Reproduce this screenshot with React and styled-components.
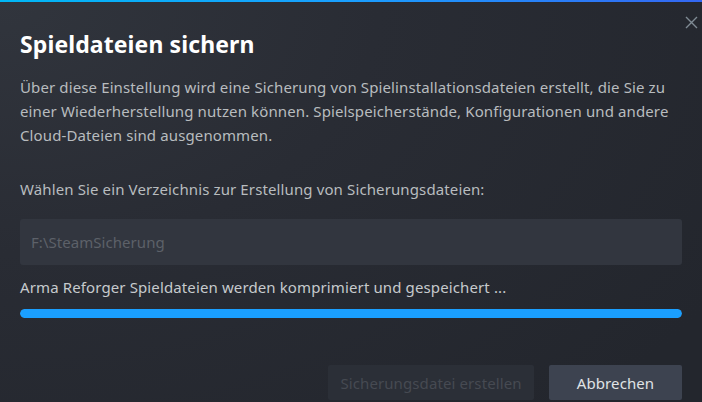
import React from "react";
import styled, { createGlobalStyle } from "styled-components";

const Global = createGlobalStyle`
  html, body { margin: 0; padding: 0; background: #23262e; }
  body { width: 702px; height: 402px; overflow: hidden; }
  * { box-sizing: border-box; }
`;

const Dialog = styled.div`
  position: relative;
  width: 702px;
  height: 402px;
  display: flex;
  flex-direction: column;
  background: radial-gradient(ellipse 120% 140% at 0% 0%, #31353d 0%, #292c34 45%, #23262d 100%);
  font-family: "Noto Sans", "Open Sans", sans-serif;
  color: #b8bcbf;
`;

const AccentBar = styled.div`
  height: 2px;
  flex: none;
  background: linear-gradient(to right, #00b7f5 0%, #1a9fff 50%, #3467f2 100%);
`;

const Close = styled.button`
  position: absolute;
  top: 14px;
  right: 3px;
  width: 16px;
  height: 16px;
  padding: 0;
  border: none;
  background: transparent;
  display: flex;
  align-items: center;
  justify-content: center;
  cursor: pointer;
`;

const Body = styled.div`
  flex: 1;
  display: flex;
  flex-direction: column;
  padding: 26px 20px 2px 20px;
`;

const Title = styled.h1`
  margin: 0;
  font-size: 23px;
  line-height: 32px;
  font-weight: 700;
  color: #ffffff;
  letter-spacing: 0.1px;
`;

const Text = styled.p`
  margin: ${(p) => p.$mt || 0}px 0 0 0;
  font-size: 15px;
  line-height: 24px;
  letter-spacing: 0.12px;
  color: ${(p) => p.$color || "#b8bcbf"};
`;

const PathInput = styled.input`
  margin-top: 18px;
  height: 46px;
  width: 100%;
  border: none;
  outline: none;
  border-radius: 3px;
  background: #32363f;
  padding: 0 11px;
  font-family: inherit;
  font-size: 15px;
  letter-spacing: 0.05px;
  color: #c6cacd;
  &::placeholder { color: #5d6169; }
`;

const Progress = styled.div`
  margin-top: 10px;
  height: 9px;
  border-radius: 5px;
  background: #3a3f48;
  overflow: hidden;
`;

const Fill = styled.div`
  height: 100%;
  background: #1a9fff;
  border-radius: 5px;
`;

const Footer = styled.div`
  margin-top: auto;
  display: flex;
  justify-content: flex-end;
  gap: 15px;
`;

const Button = styled.button`
  height: 35px;
  width: ${(p) => p.$w}px;
  border: none;
  border-radius: 2px;
  font-family: inherit;
  font-size: 15px;
  letter-spacing: 0.1px;
  padding: 0;
  background: ${(p) => (p.disabled ? "#2b2f37" : "#3d4350")};
  color: ${(p) => (p.disabled ? "#464a52" : "#e0e3e6")};
  cursor: ${(p) => (p.disabled ? "default" : "pointer")};
`;

export default function App() {
  const progress = 100;
  return (
    <>
      <Global />
      <Dialog>
        <AccentBar />
        <Close aria-label="Schließen">
          <svg width="13" height="13" viewBox="0 0 13 13">
            <path d="M1 1 L12 12 M12 1 L1 12" stroke="#7f8b94" strokeWidth="1.4" fill="none" />
          </svg>
        </Close>
        <Body>
          <Title>Spieldateien sichern</Title>
          <Text $mt={15}>
            Über diese Einstellung wird eine Sicherung von Spielinstallationsdateien erstellt, die Sie zu
            einer Wiederherstellung nutzen können. Spielspeicherstände, Konfigurationen und andere
            Cloud-Dateien sind ausgenommen.
          </Text>
          <Text $mt={30}>Wählen Sie ein Verzeichnis zur Erstellung von Sicherungsdateien:</Text>
          <PathInput placeholder="F:\SteamSicherung" readOnly />
          <Text $mt={10} $color="#c6cacd">
            Arma Reforger Spieldateien werden komprimiert und gespeichert ...
          </Text>
          <Progress>
            <Fill style={{ width: `${progress}%` }} />
          </Progress>
          <Footer>
            <Button disabled $w={206}>Sicherungsdatei erstellen</Button>
            <Button $w={133}>Abbrechen</Button>
          </Footer>
        </Body>
      </Dialog>
    </>
  );
}
